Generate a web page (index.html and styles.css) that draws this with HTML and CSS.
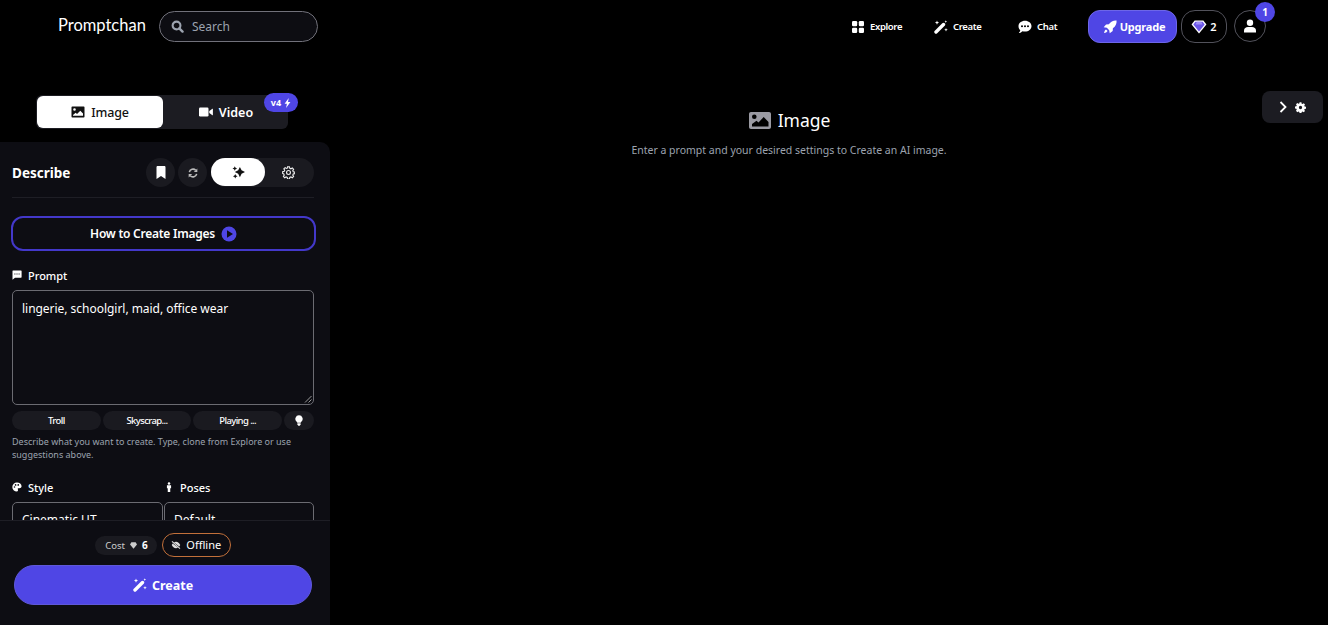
FILE: index.html
```html
<!DOCTYPE html>
<html lang="en">
<head>
  <meta charset="UTF-8" />
  <meta name="viewport" content="width=device-width, initial-scale=1.0"/>
  <title>Promptchan</title>
  <link rel="stylesheet" href="styles.css">
</head>
<body>

  <header class="topbar">
    <a class="logo" href="#">Promptchan</a>
    <div class="search">
      <svg class="search-icon" viewBox="0 0 16 16"><circle cx="6.8" cy="6.8" r="4.8" fill="none" stroke="currentColor" stroke-width="2.6"/><path d="M10.2 10.2l4 4" stroke="currentColor" stroke-width="3" stroke-linecap="round"/></svg>
      <span>Search</span>
    </div>

    <nav class="nav">
      <a class="nav-link nav-explore" href="#">
        <svg viewBox="0 0 12 12"><rect width="5.2" height="5.2" rx="1.2"/><rect x="6.8" width="5.2" height="5.2" rx="1.2"/><rect y="6.8" width="5.2" height="5.2" rx="1.2"/><rect x="6.8" y="6.8" width="5.2" height="5.2" rx="1.2"/></svg>
        Explore
      </a>
      <a class="nav-link nav-create" href="#">
        <svg viewBox="0 0 14 14"><path d="M2 12L9.5 4.5" stroke="currentColor" stroke-width="3.4" stroke-linecap="round"/><path d="M3 .5l.6 1.5 1.5.6-1.5.6L3 4.7l-.6-1.5-1.5-.6 1.5-.6zM12 8l.5 1.3 1.3.5-1.3.5-.5 1.3-.5-1.3-1.3-.5 1.3-.5zM11.8.3l.4.9.9.4-.9.4-.4.9-.4-.9-.9-.4.9-.4z"/></svg>
        Create
      </a>
      <a class="nav-link nav-chat" href="#">
        <svg viewBox="0 0 14 14"><path fill-rule="evenodd" d="M7 .8c3.6 0 6.5 2.4 6.5 5.4S10.6 11.6 7 11.6c-.9 0-1.8-.2-2.5-.4C3.7 12 2.4 13 .8 13c.7-.7 1.300-1.700 1.500-2.800C1.200 9.200.5 7.800.5 6.200.5 3.200 3.400.8 7 .8zM4 5.200a1 1 0 1 0 0 2 1 1 0 0 0 0-2zm3 0a1 1 0 1 0 0 2 1 1 0 0 0 0-2zm3 0a1 1 0 1 0 0 2 1 1 0 0 0 0-2z"/></svg>
        Chat
      </a>
    </nav>

    <button class="upgrade">
      <svg viewBox="0 0 16 16"><path d="M15.5.5c.3 3.6-1 6.7-4.200 8.800l-.2 3.200-3.400 2.700-.6-3.600-2.700-2.700-3.600-.5L3.500 5l3.200-.2C8.800 1.600 11.900.2 15.500.5z"/><path d="M3.500 10.800l1.700 1.700c-.8 1.300-2.200 2.200-4 2.300.1-1.800 1-3.200 2.300-4z"/></svg>
      Upgrade
    </button>
    <button class="gems">
      <svg viewBox="0 0 18 16"><path fill="#fff" d="M4 .5h10L17.500 5 9 15.500.5 5z"/><path fill="#6a55e8" d="M4.800 2h8.400L15.500 5 9 13 2.500 5z"/><path fill="#9d8cf5" d="M6.500 2h5L13 5H5z"/></svg>
      2
    </button>
    <button class="account">
      <svg viewBox="0 0 14 14"><circle cx="7" cy="3.700" r="3.200"/><path d="M1 13.500v-1.800C1 9.300 2.800 8 5 8h4c2.200 0 4 1.300 4 3.700v1.800z"/></svg>
      <span class="account-badge">1</span>
    </button>
  </header>

  <div class="page">
    <div class="left-col">
      <div class="mode-tabs">
        <button class="mode-tab mode-active">
          <svg viewBox="0 0 14 12"><path fill-rule="evenodd" d="M1.300.5h11.400c.6 0 .8.300.8.800v9.400c0 .5-.2.800-.8.800H1.300c-.6 0-.8-.3-.8-.8V1.300c0-.5.2-.8.8-.8zM3.500 2.200a1.300 1.300 0 1 0 0 2.600 1.300 1.300 0 0 0 0-2.600zM2 9.800h10V7.500L9.300 4.800 6 8 4.700 6.800 2 9z"/></svg>
          Image
        </button>
        <button class="mode-tab mode-video">
          <svg viewBox="0 0 14 10"><rect y=".5" width="9.500" height="9" rx="1.200"/><path d="M10.300 4l3.100-2.200c.2-.1.500 0 .5.300v5.800c0 .3-.3.400-.5.300L10.300 6z"/></svg>
          Video
        </button>
        <span class="v4-badge">v4
          <svg viewBox="0 0 8 12"><path d="M5.500 0L.5 6.800h2.800L2.300 12l5.200-7.200H4.600z"/></svg>
        </span>
      </div>

      <aside class="panel">
        <div class="panel-scroll">
          <div class="panel-head">
            <span class="panel-title">Describe</span>
            <div class="panel-tools">
              <button class="tool-btn">
                <svg class="icon-bookmark" viewBox="0 0 10 13"><path d="M.5 1.200C.5.500 1 0 1.700 0h6.600c.7 0 1.200.5 1.200 1.200V13L5 10 .5 13z"/></svg>
              </button>
              <button class="tool-btn">
                <svg class="icon-sync" viewBox="0 0 12 12"><path d="M1.600 5A4.500 4.500 0 0 1 9.300 2.800M10.400 7A4.500 4.500 0 0 1 2.700 9.200" fill="none" stroke="#bbb" stroke-width="1.900"/><path d="M11.200.6v4.200H7zM.8 11.400V7.200H5z" fill="#bbb"/></svg>
              </button>
              <div class="tool-switch">
                <span class="switch-on">
                  <svg viewBox="0 0 14 14"><path fill="#111" d="M8.500 1l1.800 3.700 3.700 1.800-3.700 1.800-1.800 3.700-1.800-3.700L3 6.500l3.700-1.800zM3 .3l.8 1.700 1.700.7-1.700.8L3 5.200l-.8-1.700L.5 2.700 2.200 2zM3.500 8.500l.8 1.800 1.700.7-1.700.8-.8 1.700-.8-1.700-1.700-.8 1.700-.7z"/></svg>
                </span>
                <span class="switch-off">
                  <svg viewBox="0 0 14 14"><circle cx="7" cy="7" r="2.100" fill="none" stroke="#eee" stroke-width="1.200"/><path fill="none" stroke="#eee" stroke-width="1.200" d="M6 .8h2l.4 1.700 1.200.5 1.500-.9 1.400 1.400-.9 1.500.5 1.200 1.700.4v1.600l-1.700.4-.5 1.200.9 1.500-1.400 1.400-1.500-.9-1.200.5-.4 1.700H6l-.4-1.700-1.200-.5-1.500.9-1.400-1.400.9-1.500-.5-1.200L.7 8V6.200l1.700-.4.5-1.200-.9-1.500 1.400-1.400 1.500.9 1.200-.5z"/></svg>
                </span>
              </div>
            </div>
          </div>

          <button class="howto">
            How to Create Images
            <svg viewBox="0 0 16 16"><circle cx="8" cy="8" r="7.500" fill="#4f46e5"/><path d="M6 4.300l6 3.700-6 3.700z" fill="#0e0e14"/></svg>
          </button>

          <div class="field-label">
            <svg viewBox="0 0 10 10"><path fill-rule="evenodd" d="M1 .5h8c.4 0 .6.2.6.6v6c0 .4-.2.6-.6.6H3L.5 9.700V1.100C.5.700.6.500 1 .5zM2.400 3.500v1h1v-1zm2.100 0v1h1v-1zm2.100 0v1h1v-1z"/></svg>
            Prompt
          </div>
          <div class="prompt-box">
            lingerie, schoolgirl, maid, office wear
            <svg class="resize-grip" viewBox="0 0 8 8"><path d="M7.500 1L1 7.500M7.500 4.500L4.500 7.500" stroke="#999" fill="none"/></svg>
          </div>

          <div class="chips">
            <span class="chip">Troll</span>
            <span class="chip">Skyscrap...</span>
            <span class="chip">Playing ...</span>
            <span class="chip chip-bulb">
              <svg viewBox="0 0 10 13"><path d="M5 0a4.500 4.500 0 0 1 2.900 8c-.4.4-.6.8-.7 1.300H2.800C2.700 8.800 2.500 8.400 2.100 8A4.500 4.500 0 0 1 5 0z"/><path d="M3 10h4v1.200L6 13H4l-1-1.800z"/></svg>
            </span>
          </div>
          <p class="hint">Describe what you want to create. Type, clone from Explore or use suggestions above.</p>

          <div class="two-col">
            <div>
              <div class="field-label">
                <svg viewBox="0 0 12 12"><path fill-rule="evenodd" d="M6 .5c3 0 5.500 2 5.500 4.600 0 1.500-1.200 2.400-2.600 2.400H7.700c-.7 0-1 .7-.7 1.200.5.800.2 2.800-1.200 2.800A5.500 5.500 0 0 1 6 .5zM3 5a1 1 0 1 0 0 2 1 1 0 0 0 0-2zm1.300-2.500a1 1 0 1 0 0 2 1 1 0 0 0 0-2zm3.200 0a1 1 0 1 0 0 2 1 1 0 0 0 0-2z"/></svg>
                Style
              </div>
              <div class="select-box">Cinematic UT</div>
            </div>
            <div>
              <div class="field-label">
                <svg viewBox="0 0 12 12"><circle cx="6" cy="1.800" r="1.500"/><path d="M3.500 4h5v3.500h-1V12h-3V7.500h-1z"/></svg>
                Poses
              </div>
              <div class="select-box">Default</div>
            </div>
          </div>
        </div>

        <div class="panel-foot">
          <div class="foot-pills">
            <span class="cost">Cost
              <svg viewBox="0 0 10 9"><path d="M2 0h6l2 3-5 6-5-6z"/></svg>
              <b>6</b>
            </span>
            <span class="offline">
              <svg viewBox="0 0 12 10"><path d="M1 .5l10 9" stroke="#ddd" stroke-width="1.400"/><path d="M6 1c2.400 0 4.300 1.800 5.300 4-.3.700-.7 1.300-1.200 1.800L3.400 1.700C4.200 1.300 5 1 6 1zM.7 5c.3-.7.7-1.300 1.200-1.800l6.600 5c-.8.5-1.600.8-2.500.8C3.600 9 1.700 7.200.7 5z" fill="#ddd"/></svg>
              Offline
            </span>
          </div>
          <button class="create-btn">
            <svg viewBox="0 0 14 14"><path d="M2 12L9.500 4.500" stroke="currentColor" stroke-width="3.400" stroke-linecap="round"/><path d="M3 .5l.6 1.500 1.500.6-1.500.6L3 4.700l-.6-1.500-1.500-.6 1.500-.6zM12 8l.5 1.300 1.300.5-1.300.5-.5 1.300-.5-1.300-1.300-.5 1.300-.5zM11.800.3l.4.9.9.4-.9.4-.4.9-.4-.9-.9-.4.9-.4z"/></svg>
            Create
          </button>
        </div>
      </aside>
    </div>

    <main class="content">
      <h1 class="content-title">
        <svg viewBox="0 0 22 17"><path fill-rule="evenodd" d="M2 0h18c1.200 0 2 .8 2 2v13c0 1.200-.8 2-2 2H2c-1.200 0-2-.8-2-2V2C0 .8.800 0 2 0zm3.300 2.500a2.300 2.300 0 1 0 0 4.600 2.300 2.300 0 0 0 0-4.600zM3 14.500h16.500V10l-4.800-5-5.200 5.600-2-1.900L3 12z"/></svg>
        Image
      </h1>
      <p class="content-sub">Enter a prompt and your desired settings to Create an AI image.</p>
    </main>

    <div class="right-col">
      <button class="settings-toggle">
        <svg class="toggle-chevron" viewBox="0 0 8 12"><path d="M1.500 1l5 5-5 5" fill="none" stroke="#fff" stroke-width="1.800"/></svg>
        <svg class="toggle-gear" viewBox="0 0 12 12"><path fill-rule="evenodd" d="M5 .3h2l.3 1.500.9.4 1.300-.8 1.400 1.400-.8 1.300.4.9 1.500.3v2l-1.500.3-.4.9.8 1.300-1.400 1.400-1.300-.8-.9.4-.3 1.500H5l-.3-1.500-.9-.4-1.300.8L1.100 9.500l.8-1.300-.4-.9L0 7V5l1.500-.3.4-.9-.8-1.300 1.400-1.400 1.300.8.900-.4zM6 4.200a1.800 1.800 0 1 0 0 3.600 1.800 1.800 0 0 0 0-3.600z"/></svg>
      </button>
    </div>
  </div>

</body>
</html>
```

FILE: styles.css
```css
* {
  box-sizing: border-box;
}

html, body {
  height: 100%;
}

body {
  margin: 0;
  background-color: #000;
  color: #fff;
  font-family: "Noto Sans", Arial, sans-serif;
  font-size: 13px;
  overflow: hidden;
}

a {
  color: #fff;
  text-decoration: none;
}

button {
  font-family: inherit;
  color: inherit;
  cursor: pointer;
}

svg {
  display: block;
  flex-shrink: 0;
  fill: currentColor;
}

/* top bar */
.topbar {
  display: flex;
  align-items: flex-start;
  height: 54px;
  padding: 10px 62px 0 58px;
}

.logo {
  width: 101px;
  margin-top: 4px;
  font-family: Lato, sans-serif;
  font-size: 16.5px;
  line-height: 22px;
}

.search {
  display: flex;
  align-items: center;
  gap: 8px;
  width: 159px;
  height: 31px;
  margin-top: 1px;
  padding-left: 11px;
  background-color: #0d0d12;
  border: 1px solid #71717a;
  border-radius: 16px;
  color: #9ca3af;
  font-size: 12px;
}

.search-icon {
  width: 13px;
  height: 13px;
}

.nav {
  display: flex;
  align-items: center;
  height: 33px;
  margin-left: auto;
}

.nav-link {
  display: flex;
  align-items: center;
  gap: 5px;
  font-size: 9.5px;
  font-weight: 600;
  letter-spacing: -0.35px;
}

.nav-link svg {
  width: 14px;
  height: 14px;
}

.nav-explore svg {
  width: 12px;
  height: 12px;
  margin-right: 1px;
}

.nav-explore {
  width: 82px;
}

.nav-create {
  width: 84px;
}

.nav-chat {
  width: 70px;
}

.upgrade {
  display: flex;
  align-items: center;
  justify-content: center;
  gap: 3px;
  width: 89px;
  height: 33px;
  padding: 0 0 0 3px;
  background-color: #4f46e5;
  border: 1px solid #6d66e8;
  border-radius: 12px;
  font-size: 11px;
  font-weight: 700;
  letter-spacing: -0.2px;
}

.upgrade svg {
  width: 14px;
  height: 14px;
}

.gems {
  display: flex;
  align-items: center;
  justify-content: center;
  gap: 3px;
  width: 46px;
  height: 33px;
  margin-left: 4px;
  background: none;
  border: 1px solid #52525b;
  border-radius: 14px;
  font-size: 11px;
  font-weight: 600;
}

.gems svg {
  width: 16px;
  height: 14px;
}

.account {
  position: relative;
  display: flex;
  align-items: center;
  justify-content: center;
  width: 32px;
  height: 32px;
  margin-left: 7px;
  padding: 0;
  background: none;
  border: 1px solid #52525b;
  border-radius: 50%;
}

.account svg {
  width: 14px;
  height: 14px;
}

.account-badge {
  position: absolute;
  top: -9px;
  right: -10px;
  width: 20px;
  height: 20px;
  background-color: #4f46e5;
  border-radius: 50%;
  font-size: 10px;
  font-weight: 700;
  line-height: 20px;
  text-align: center;
}

/* page columns */
.page {
  display: flex;
  height: 571px;
}

.left-col {
  display: flex;
  flex-direction: column;
  width: 330px;
  padding-top: 41px;
}

.mode-tabs {
  position: relative;
  display: flex;
  width: 252px;
  height: 34px;
  margin-left: 36px;
  padding: 1px;
  background-color: #1c1c22;
  border-radius: 6px;
}

.mode-tab {
  display: flex;
  flex: 1;
  align-items: center;
  justify-content: center;
  gap: 6px;
  height: 32px;
  background: none;
  border: none;
  border-radius: 6px;
  font-size: 12.5px;
  font-weight: 600;
}

.mode-tab svg {
  width: 14px;
  height: 12px;
}

.mode-active {
  flex: 0 0 126px;
  background-color: #fff;
  color: #111;
  font-weight: 500;
  letter-spacing: -0.2px;
}

.mode-video {
  padding-left: 8px;
}

.v4-badge {
  position: absolute;
  top: -2px;
  right: -10px;
  display: flex;
  align-items: center;
  justify-content: center;
  gap: 3px;
  width: 34px;
  height: 19px;
  background-color: #4f46e5;
  border-radius: 10px;
  font-size: 9px;
  font-weight: 700;
}

.v4-badge svg {
  width: 7px;
  height: 10px;
}

.panel {
  display: flex;
  flex: 1;
  flex-direction: column;
  min-height: 0;
  margin-top: 13px;
  background-color: #0d0d13;
  border-top-right-radius: 10px;
}

.panel-scroll {
  flex: 1;
  min-height: 0;
  padding: 16px 16px 0 12px;
  overflow: hidden;
}

.panel-head {
  display: flex;
  align-items: center;
  justify-content: space-between;
  height: 40px;
  padding-bottom: 10px;
  border-bottom: 1px solid #1e1e25;
}

.panel-title {
  font-size: 13.5px;
  font-weight: 700;
}

.panel-tools {
  display: flex;
  align-items: center;
  gap: 3px;
}

.tool-btn {
  display: flex;
  align-items: center;
  justify-content: center;
  width: 29px;
  height: 29px;
  padding: 0;
  background-color: #1a1a20;
  border: none;
  border-radius: 50%;
}

.icon-bookmark {
  width: 10px;
  height: 13px;
}

.icon-sync {
  width: 10px;
  height: 10px;
}

.tool-switch {
  display: flex;
  width: 103px;
  height: 29px;
  margin-left: 1px;
  background-color: #1a1a20;
  border-radius: 15px;
}

.switch-on,
.switch-off {
  display: flex;
  align-items: center;
  justify-content: center;
  height: 28px;
}

.switch-on {
  width: 54px;
  background-color: #fff;
  border-radius: 15px;
}

.switch-off {
  width: 47px;
}

.switch-on svg,
.switch-off svg {
  width: 13px;
  height: 13px;
}

.howto {
  display: flex;
  align-items: center;
  justify-content: center;
  gap: 6px;
  width: 305px;
  height: 35px;
  margin: 18px 0 0 -1px;
  background: none;
  border: 2px solid #4338ca;
  border-radius: 12px;
  font-size: 12px;
  font-weight: 600;
  letter-spacing: -0.25px;
}

.howto svg {
  width: 16px;
  height: 16px;
}

.field-label {
  display: flex;
  align-items: center;
  gap: 6px;
  height: 16px;
  font-size: 11px;
  font-weight: 500;
}

.field-label svg {
  width: 10px;
  height: 10px;
}

.howto + .field-label {
  margin-top: 16px;
}

.prompt-box {
  position: relative;
  width: 302px;
  height: 115px;
  margin-top: 7px;
  padding: 8px 9px;
  border: 1px solid #6b6b72;
  border-radius: 5px;
  font-size: 12px;
  letter-spacing: -0.03px;
  line-height: 20px;
  color: #fff;
}

.resize-grip {
  position: absolute;
  right: 1px;
  bottom: 1px;
  width: 8px;
  height: 8px;
}

.chips {
  display: grid;
  grid-template-columns: 1fr 1fr 1fr 30px;
  gap: 2px;
  width: 302px;
  margin-top: 6px;
}

.chip {
  display: flex;
  align-items: center;
  justify-content: center;
  height: 19px;
  background-color: #1a1a20;
  border-radius: 10px;
  font-size: 9.5px;
  font-weight: 500;
  letter-spacing: -0.6px;
}

.chip-bulb svg {
  width: 8px;
  height: 11px;
}

.hint {
  width: 300px;
  margin: 5px 0 0;
  color: #9ca3af;
  font-size: 9px;
  line-height: 13px;
}

.two-col {
  display: grid;
  grid-template-columns: 151px 150px;
  gap: 1px;
  margin-top: 18px;
}

.select-box {
  height: 60px;
  margin-top: 7px;
  padding: 7px 9px;
  border: 1px solid #6b6b72;
  border-radius: 5px;
  font-size: 12px;
  line-height: 20px;
}

.panel-foot {
  flex: 0 0 105px;
  border-top: 1px solid #1e1e25;
}

.foot-pills {
  display: flex;
  align-items: center;
  justify-content: center;
  gap: 5px;
  height: 24px;
  margin-top: 12px;
  padding-right: 4px;
}

.cost {
  display: flex;
  align-items: center;
  gap: 5px;
  height: 19px;
  padding: 0 9px 0 10px;
  background-color: #1a1a20;
  border-radius: 10px;
  color: #ccc;
  font-size: 9.5px;
}

.cost svg {
  width: 7px;
  height: 7px;
}

.cost b {
  color: #fff;
  font-size: 10px;
}

.offline {
  display: flex;
  align-items: center;
  justify-content: center;
  gap: 5px;
  width: 69px;
  height: 24px;
  border: 1px solid #c2703a;
  border-radius: 12px;
  font-size: 11px;
  line-height: 20px;
}

.offline svg {
  width: 10px;
  height: 8px;
}

.create-btn {
  display: flex;
  align-items: center;
  justify-content: center;
  gap: 5px;
  width: 298px;
  height: 40px;
  margin: 8px 0 0 14px;
  background-color: #4f46e5;
  border: 1px solid #5f58d8;
  border-radius: 20px;
  font-size: 12.5px;
  font-weight: 700;
}

.create-btn svg {
  width: 14px;
  height: 14px;
}

/* main area */
.content {
  flex: 1;
  padding-top: 54px;
  text-align: center;
}

.content-title {
  display: flex;
  align-items: center;
  justify-content: center;
  gap: 7px;
  margin: 0 0 0 1px;
  font-size: 17.5px;
  font-weight: 400;
  line-height: 24px;
}

.content-title svg {
  width: 22px;
  height: 17px;
  color: #9a9aa2;
}

.content-sub {
  margin: 11px 0 0;
  color: #9ca3af;
  font-size: 10.5px;
  line-height: 14px;
}

.right-col {
  flex: 0 0 80px;
  padding: 37px 0 0 14px;
}

.settings-toggle {
  display: flex;
  align-items: center;
  justify-content: center;
  gap: 8px;
  width: 61px;
  height: 32px;
  padding: 0;
  background-color: #1c1c22;
  border: none;
  border-radius: 8px;
}

.toggle-chevron {
  width: 8px;
  height: 12px;
}

.toggle-gear {
  width: 11px;
  height: 11px;
}
```
